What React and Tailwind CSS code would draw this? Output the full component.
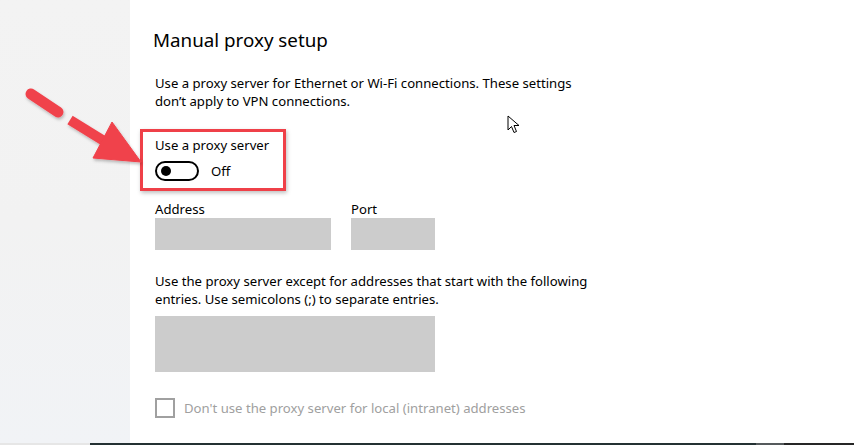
import React from "react";

const font = { fontFamily: '"Noto Sans", "Open Sans", sans-serif' };

function Arrow() {
  return (
    <svg
      className="absolute left-0 top-0 pointer-events-none"
      width="160"
      height="190"
      viewBox="0 0 160 190"
    >
      <defs>
        <filter id="sh" x="-20%" y="-20%" width="140%" height="140%">
          <feDropShadow dx="1" dy="2" stdDeviation="1.5" floodColor="#000" floodOpacity="0.25" />
        </filter>
      </defs>
      <g filter="url(#sh)" fill="#f0424b" stroke="#f0424b">
        <line x1="31" y1="94" x2="58" y2="112" strokeWidth="11" strokeLinecap="round" />
        <line x1="70" y1="120" x2="104" y2="141" strokeWidth="10" strokeLinecap="butt" />
        <polygon points="93,158 112,122 141,162" strokeWidth="1" strokeLinejoin="round" />
      </g>
    </svg>
  );
}

function Cursor() {
  return (
    <svg className="absolute left-[507px] top-[115px]" width="14" height="20" viewBox="0 0 14 20">
      <path d="M1 1 L1 15 L4.5 11.5 L7 17.5 L9.5 16.5 L7 10.5 L12 10.5 Z" fill="#fff" stroke="#000" strokeWidth="1" strokeLinejoin="round" />
    </svg>
  );
}

export default function App() {
  return (
    <div className="relative w-[854px] h-[445px] overflow-hidden bg-white text-black" style={font}>
      <div className="flex h-[443px]">
        <div className="w-[130px] h-full bg-gradient-to-b from-[#f3f3f3] via-[#f2f2f2] to-[#f1f3f6]" />
        <div className="flex-1 pl-[23px] pt-[26px]">
          <h2 className="text-[18.8px] leading-[28px] font-normal">Manual proxy setup</h2>
          <p className="mt-[20px] ml-[2px] w-[460px] text-[13.15px] leading-[18px]">
            Use a proxy server for Ethernet or Wi-Fi connections. These settings
            <br />
            don’t apply to VPN connections.
          </p>
          <div className="mt-[19px] -ml-[13px] w-[146px] h-[62px] border-[3px] border-[#ef4048] shadow-[1px_2px_4px_rgba(0,0,0,0.25)] pl-[12px] pt-[4px]">
            <div className="text-[13.15px] leading-[18px]">Use a proxy server</div>
            <div className="mt-[7px] flex items-center">
              <div className="w-[44px] h-[20px] rounded-full border-2 border-black flex items-center pl-[4px]">
                <div className="w-[10px] h-[10px] rounded-full bg-black" />
              </div>
              <span className="ml-[12px] text-[13.15px] leading-[18px]">Off</span>
            </div>
          </div>
          <div className="mt-[9px] ml-[2px] flex gap-[20px]">
            <div className="flex flex-col">
              <span className="text-[13.15px] leading-[18px]">Address</span>
              <div className="w-[176px] h-[32px] bg-[#cccccc]" />
            </div>
            <div className="flex flex-col">
              <span className="text-[13.15px] leading-[18px]">Port</span>
              <div className="w-[84px] h-[32px] bg-[#cccccc]" />
            </div>
          </div>
          <p className="mt-[22px] ml-[2px] w-[460px] text-[13.15px] leading-[18px]">
            Use the proxy server except for addresses that start with the following
            <br />
            entries. Use semicolons (;) to separate entries.
          </p>
          <div className="mt-[8px] ml-[2px] w-[280px] h-[56px] bg-[#cccccc]" />
          <div className="mt-[26px] ml-[2px] flex items-center">
            <div className="w-[20px] h-[20px] border-2 border-[#a0a0a0]" />
            <span className="ml-[9px] text-[13.15px] leading-[18px] text-[#a0a0a0]">
              Don't use the proxy server for local (intranet) addresses
            </span>
          </div>
        </div>
      </div>
      <div className="flex h-[2px]">
        <div className="w-[90px] bg-[#e6e6e6]" />
        <div className="w-[666px] bg-[#243133]" />
        <div className="w-[28px] bg-[#555a5c]" />
        <div className="flex-1 bg-[#262626]" />
      </div>
      <Arrow />
      <Cursor />
    </div>
  );
}
